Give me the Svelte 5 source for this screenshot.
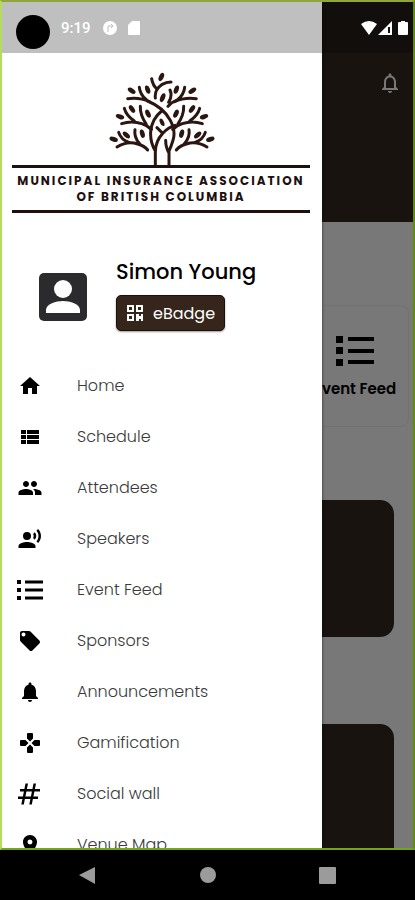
<script>
  const menu = [
    { label: 'Home', icon: 'M10 20v-6h4v6h5v-8h3L12 3 2 12h3v8z' },
    { label: 'Schedule', icon: 'M4 14h4v-4H3v4zM3 19h5v-4H3zM3 9h5V5H3zM9 14h12v-4H9zM9 19h12v-4H9zM9 5v4h12V5z' },
    { label: 'Attendees', icon: 'M16 11c1.66 0 2.99-1.34 2.99-3S17.66 5 16 5s-3 1.34-3 3 1.34 3 3 3zm-8 0c1.66 0 2.99-1.34 2.99-3S9.66 5 8 5 5 6.34 5 8s1.34 3 3 3zm0 2c-2.33 0-7.500 1.170-7.500 3.500V19h14.500v-2.500c0-2.330-4.670-3.500-7-3.500zm8 0c-.29 0-.62.02-.97.05 1.160.84 1.970 1.970 1.970 3.450V19h6.500v-2.500c0-2.330-5.170-3.500-7.500-3.500z' },
    { label: 'Speakers', icon: 'M9 5a4 4 0 1 1 0 8 4 4 0 0 1 0-8zM9 15c-2.67 0-8.500 1.340-8.500 4v2h17v-2c0-2.660-5.830-4-8.500-4zM16.760 5.360l-1.680 1.690c.84 1.180.84 2.710 0 3.890l1.680 1.690c2.020-2.020 2.020-5.070 0-7.270zM20.070 2l-1.630 1.630c2.770 3.020 2.770 7.560 0 10.740L20.070 16c3.900-3.890 3.910-9.950 0-14z' },
    { label: 'Event Feed', icon: 'M-1 2h4v4h-4zM-1 10h4v4h-4zM-1 18h4v4h-4zM7 2.500h18v3H7zM7 10.500h18v3H7zM7 18.500h18v3H7z' },
    { label: 'Sponsors', icon: 'M21.410 11.580l-9-9C12.050 2.220 11.550 2 11 2H4c-1.100 0-2 .9-2 2v7c0 .55.22 1.050.59 1.420l9 9c.36.36.86.58 1.410.58.55 0 1.050-.22 1.410-.59l7-7c.37-.36.59-.86.59-1.410 0-.55-.23-1.060-.59-1.420zM5.500 7.500a2 2 0 1 1 0-4 2 2 0 0 1 0 4z' },
    { label: 'Announcements', icon: 'M12 22c1.100 0 2-.9 2-2h-4c0 1.100.89 2 2 2zm6-6v-5c0-3.070-1.640-5.640-4.500-6.320V4c0-.83-.67-1.500-1.500-1.500s-1.500.67-1.500 1.500v.68C7.630 5.360 6 7.920 6 11v5l-2 2v1h16v-1z' },
    { label: 'Gamification', icon: 'M15 7.500V3q0-1-1-1h-4q-1 0-1 1v4.500l3 3zM7.500 9H3q-1 0-1 1v4q0 1 1 1h4.500l3-3zM9 16.500V21q0 1 1 1h4q1 0 1-1v-4.500l-3-3zM16.500 9l-3 3 3 3H21q1 0 1-1v-4q0-1-1-1z' },
    { label: 'Social wall', icon: 'M7.500 1.500h2.500L8.900 7h5.500l1.100-5.500H18L16.900 7H22v2.400h-5.600l-1 5.200H20V17h-5.100l-1.100 5.500h-2.500l1.100-5.500H6.900l-1.100 5.500H3.300L4.400 17H0v-2.400h4.900l1-5.200H2V7h4.400zM8.400 9.400l-1 5.200h5.500l1-5.200z' },
    { label: 'Venue Map', icon: 'M12 2C8.130 2 5 5.130 5 9c0 5.250 7 13 7 13s7-7.750 7-13c0-3.870-3.130-7-7-7zm0 9.500a2.500 2.500 0 0 1 0-5 2.500 2.500 0 0 1 0 5z' }
  ]

  // [cx, cy, angle]
  const sideLeaves = [
    [38, 223, 18],
    [76, 210, 42],
    [124, 206, 75],
    [57, 155, 18],
    [93, 132, 55],
    [141, 146, 65],
    [92, 77, 32],
    [140, 74, 70]
  ]
</script>

{#snippet outerBranches()}
  <path d="M48 246Q80 226 110 237Q130 242 140 255M53 202Q60 224 84 232M102 194Q98 216 116 236M62 176Q92 166 122 176Q140 182 151 193M70 130Q76 152 100 168M118 124Q117 150 136 178M80 101Q116 96 145 110M115 67Q117 88 136 104" />
  {#each sideLeaves as [x, y, angle]}
    <ellipse class="leaf" cx={x} cy={y} rx="13" ry="7" transform="rotate({angle} {x} {y})" />
  {/each}
{/snippet}

<div class="phone">
  <div class="screen">
    <main class="page">
      <header class="page-header">
        <button class="bell" aria-label="Notifications">
          <svg viewBox="0 0 24 24" width="24" height="24">
            <path d="M12 22c1.100 0 2-.9 2-2h-4c0 1.100.9 2 2 2zm6-6v-5c0-3.070-1.630-5.640-4.500-6.320V4c0-.83-.67-1.500-1.500-1.500s-1.500.67-1.500 1.500v.68C7.640 5.360 6 7.920 6 11v5l-2 2v1h16v-1l-2-2zm-2 1H8v-6c0-2.480 1.510-4.500 4-4.500s4 2.020 4 4.500v6z" />
          </svg>
        </button>
      </header>
      <div class="tiles">
        <a class="tile" href="#feed">
          <svg viewBox="0 0 38 32" width="38" height="32">
            <path d="M0 1h7v7H0zM0 12h7v7H0zM0 24h7v7H0zM12 2h26v4H12zM12 14h26v4H12zM12 25h26v4H12z" />
          </svg>
          <span>Event Feed</span>
        </a>
      </div>
      <div class="panels">
        <div class="panel"></div>
        <div class="panel"></div>
      </div>
    </main>

    <div class="scrim"></div>

    <aside class="drawer">
      <div class="logo">
        <svg class="tree" viewBox="0 0 360 300" width="120" height="100">
          {@render outerBranches()}
          <g transform="translate(366 0) scale(-1 1)">{@render outerBranches()}</g>
          <path d="M140 108Q188 128 208 166Q225 198 216 226Q210 246 204 258V300M163 300V258Q147 232 149 200Q152 162 182 138M163 264Q162 230 186 204Q202 187 222 181M226 106Q210 112 201 124M163 99Q160 74 182 59Q196 51 210 51M152 41Q155 61 169 73M207 75Q215 92 203 112M168 188L184 204M194 226Q194 248 204 264" />
          <ellipse class="leaf" cx="181" cy="36" rx="13" ry="7" transform="rotate(-65 181 36)" />
          <ellipse class="leaf" cx="185" cy="98" rx="14" ry="7" transform="rotate(-68 185 98)" />
          <ellipse class="leaf" cx="183" cy="172" rx="12" ry="6" transform="rotate(65 183 172)" />
        </svg>
        <p class="logo-text">MUNICIPAL INSURANCE ASSOCIATION<br />OF BRITISH COLUMBIA</p>
      </div>

      <section class="profile">
        <svg class="avatar" viewBox="0 0 48 48" width="48" height="48">
          <rect width="48" height="48" rx="5" />
          <circle cx="24" cy="16" r="9" />
          <path d="M7 40v-3c0-6 10-9 17-9s17 3 17 9v3z" />
        </svg>
        <div class="who">
          <h1>Simon Young</h1>
          <button class="ebadge">
            <svg viewBox="0 0 18 18" width="18" height="18">
              <path fill-rule="evenodd" d="M1 1h7v7H1zM3 3v3h3V3zM10 1h7v7h-7zM12 3v3h3V3zM1 10h7v7H1zM3 12v3h3v-3zM10 10h3v2h2v-2h2v7h-2v-2h-2v2h-3z" />
            </svg>
            eBadge
          </button>
        </div>
      </section>

      <nav>
        {#each menu as item}
          <a class="item" href="#{item.label}">
            <svg viewBox="0 0 24 24" width="24" height="24"><path fill-rule="evenodd" d={item.icon} /></svg>
            <span>{item.label}</span>
          </a>
        {/each}
      </nav>
    </aside>

    <div class="status">
      <span class="camera"></span>
      <time>9:19</time>
      <svg viewBox="0 0 16 16" width="16" height="16">
        <circle cx="8" cy="8" r="7" />
        <path class="mark" d="M6 12V6h4M9 4l2 2-2 2" />
      </svg>
      <svg class="sd" viewBox="0 0 12 14" width="12" height="14"><path d="M4 0h7q1 0 1 1v12q0 1-1 1H1q-1 0-1-1V4z" /></svg>
      <div class="signals">
        <svg viewBox="0 0 16 14" width="16" height="14"><path d="M0 3Q8-3 16 3L8 14z" /></svg>
        <svg viewBox="0 0 14 14" width="14" height="14">
          <path d="M14 0v14H0z" />
          <path class="gap" d="M11 6v6" />
        </svg>
        <svg class="battery" viewBox="0 0 10 14" width="10" height="14"><path d="M3 0h4v1h2q1 0 1 1v11q0 1-1 1H1q-1 0-1-1V2q0-1 1-1h2z" /></svg>
      </div>
    </div>
  </div>

  <footer class="softkeys">
    <button aria-label="Back"><svg viewBox="0 0 18 18" width="18" height="18"><path d="M17 1v17L1 9z" /></svg></button>
    <button aria-label="Home"><svg viewBox="0 0 18 18" width="18" height="18"><circle cx="9" cy="9" r="8" /></svg></button>
    <button aria-label="Overview"><svg viewBox="0 0 18 18" width="18" height="18"><rect x="0" y="1" width="17" height="17" rx="1" /></svg></button>
  </footer>
</div>

<style>
:global(body) {
  margin: 0;
  background: #000;
}
.phone {
  height: 100vh;
  display: flex;
  flex-direction: column;
  font-family: Poppins, Inter, sans-serif;
  color: #000;
}
.phone * {
  box-sizing: border-box;
}
a {
  color: inherit;
  text-decoration: none;
}
button {
  border: 0;
  padding: 0;
  background: none;
  font: inherit;
}
svg {
  display: block;
  flex-shrink: 0;
}
.screen {
  flex: 1;
  min-height: 0;
  position: relative;
  overflow: hidden;
  border: 2px solid;
  border-color: #8fa63a #628a0b #76a318 #b6dc5b;
}

.page {
  height: 100%;
  overflow: hidden;
  background: #fff;
}
.page-header {
  height: 220px;
  padding: 69px 11px 0;
  display: flex;
  justify-content: flex-end;
  align-items: flex-start;
  background: #352a20;
}
.bell {
  fill: #fff;
}
.tiles {
  display: flex;
  justify-content: flex-end;
  padding: 83px 4px 0;
}
.tile {
  width: 108px;
  height: 122px;
  padding-top: 29px;
  display: flex;
  flex-direction: column;
  align-items: center;
  gap: 10px;
  border: 1px solid #f2f2f2;
  border-radius: 8px;
  font-size: 15px;
  line-height: 24px;
  font-weight: 600;
  white-space: nowrap;
}
.panels {
  padding: 73px 19px 0;
  display: flex;
  flex-direction: column;
  gap: 87px;
}
.panel {
  height: 137px;
  border-radius: 14px;
  background: #352a20;
}
.scrim {
  position: absolute;
  inset: 0;
  background: rgba(0, 0, 0, 0.53);
}

.drawer {
  position: absolute;
  inset: 0 auto 0 0;
  width: 320px;
  max-width: 85%;
  padding: 63px 12px 0 10px;
  overflow: hidden;
  background: #fff;
  box-shadow: 0 0 3px rgba(0, 0, 0, 0.6);
}
.logo {
  display: flex;
  flex-direction: column;
  align-items: center;
}
.tree {
  fill: none;
  stroke: #2b1610;
  stroke-width: 9;
  stroke-linecap: round;
}
.leaf {
  fill: #2b1610;
  stroke: none;
}
.logo-text {
  align-self: stretch;
  margin: 0;
  padding: 5px 0;
  border: solid #1e1010;
  border-width: 3px 0;
  color: #1e1010;
  font-size: 12px;
  line-height: 16px;
  font-weight: 700;
  letter-spacing: 2px;
  text-align: center;
  white-space: nowrap;
}
.profile {
  display: flex;
  align-items: center;
  gap: 29px;
  padding: 44px 0 29px 27px;
}
.avatar {
  margin-top: 6px;
}
.avatar rect {
  fill: #2b2b2d;
}
.avatar circle,
.avatar path {
  fill: #fff;
}
h1 {
  margin: 0 0 8px;
  font-size: 21px;
  line-height: 30px;
  font-weight: 500;
}
.ebadge {
  height: 36px;
  padding: 0 9px;
  display: flex;
  align-items: center;
  gap: 9px;
  border: 1px solid #1c100a;
  border-radius: 5px;
  background: #35251b;
  color: #fff;
  fill: #fff;
  font-size: 16px;
  font-weight: 400;
  box-shadow: 0 1px 2px rgba(0, 0, 0, 0.4);
}
.item {
  height: 51px;
  padding-left: 6px;
  display: flex;
  align-items: center;
  gap: 35px;
  font-size: 16px;
  font-weight: 300;
  color: #3a3a3a;
}
.item svg {
  fill: #000;
  overflow: visible;
}

.status {
  position: absolute;
  inset: 0 0 auto;
  height: 51px;
  padding: 0 5px 0 14px;
  display: flex;
  align-items: center;
  background: rgba(0, 0, 0, 0.25);
  color: #fff;
  fill: #fff;
  font-family: Roboto, sans-serif;
}
.camera {
  width: 34px;
  height: 34px;
  margin: 9px 11px 0 0;
  border-radius: 50%;
  background: #000;
}
time {
  margin-right: 11px;
  font-size: 15px;
  font-weight: 500;
}
.mark {
  fill: none;
  stroke: #bfbfbf;
  stroke-width: 1;
}
.sd {
  margin-left: 10px;
}
.signals {
  margin-left: auto;
  display: flex;
  gap: 1px;
}
.battery {
  margin-left: 5px;
}
.gap {
  stroke: #130f0c;
  stroke-width: 2;
}

.softkeys {
  height: 50px;
  padding: 0 68px;
  display: flex;
  justify-content: space-between;
  align-items: center;
  background: #000;
}
.softkeys button {
  padding: 0 10px;
  fill: #9b9b9b;
}
</style>
